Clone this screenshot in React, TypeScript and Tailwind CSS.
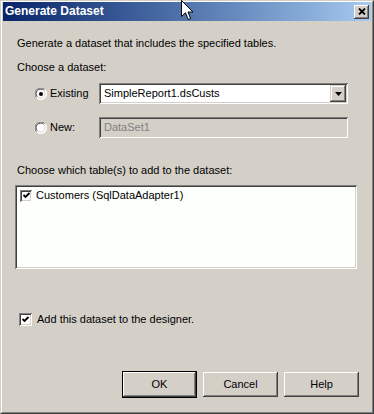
import React from 'react';

const font = { fontFamily: '"Liberation Sans", Arial, sans-serif' };

const Radio = ({ checked }: { checked?: boolean }) => (
  <svg width="12" height="12" viewBox="0 0 12 12" className="shrink-0">
    <circle cx="6" cy="6" r="5.5" fill="#fff" />
    <path d="M1.6 9.9 A5.5 5.5 0 0 1 9.9 1.6" fill="none" stroke="#808080" strokeWidth="1" />
    <path d="M2.4 8.8 A4.5 4.5 0 0 1 8.8 2.4" fill="none" stroke="#404040" strokeWidth="1" />
    <path d="M9.9 1.6 A5.5 5.5 0 0 1 1.6 9.9" fill="none" stroke="#fff" strokeWidth="1" />
    <path d="M8.8 2.4 A4.5 4.5 0 0 1 2.4 8.8" fill="none" stroke="#d4d0c8" strokeWidth="1" />
    {checked && <circle cx="6" cy="6" r="2" fill="#000" />}
  </svg>
);

const Check = ({ size = 13 }: { size?: number }) => (
  <div
    className="shrink-0 bg-white shadow-[inset_1px_1px_#808080,inset_-1px_-1px_#fff,inset_2px_2px_#404040,inset_-2px_-2px_#d4d0c8] flex items-center justify-center"
    style={{ width: size, height: size }}
  >
    <svg width="9" height="9" viewBox="0 0 9 9">
      <path d="M1.5 4 L3.5 6 L7.5 2" fill="none" stroke="#000" strokeWidth="1.8" />
    </svg>
  </div>
);

const Button = ({ label, primary }: { label: string; primary?: boolean }) =>
  primary ? (
    <div className="w-[75px] h-[27px] border border-black">
      <div className="w-full h-full flex items-center justify-center text-[11px] bg-[#d4d0c8] shadow-[inset_-1px_-1px_#404040,inset_1px_1px_#fff,inset_-2px_-2px_#808080,inset_2px_2px_#d4d0c8]">
        {label}
      </div>
    </div>
  ) : (
    <div className="w-[75px] h-[25px] flex items-center justify-center text-[11px] bg-[#d4d0c8] shadow-[inset_-1px_-1px_#404040,inset_1px_1px_#fff,inset_-2px_-2px_#808080,inset_2px_2px_#d4d0c8]">
      {label}
    </div>
  );

export default function App() {
  return (
    <div className="relative w-[374px] h-[414px] text-black text-[11px] leading-[13px]" style={font}>
      <div className="w-full h-full bg-[#d4d0c8] border border-t-[#d4d0c8] border-l-[#d4d0c8] border-r-[#404040] border-b-[#404040]">
        <div className="w-full h-full border border-t-white border-l-white border-r-[#808080] border-b-[#808080] px-px flex flex-col">
          {/* title bar */}
          <div className="h-[19px] bg-gradient-to-r from-[#0a246a] to-[#a6caf0] flex items-center justify-between pl-[2px] pr-[2px]">
            <span className="text-white font-bold text-[12px]">Generate Dataset</span>
            <div className="w-[15px] h-[14px] bg-[#d4d0c8] shadow-[inset_-1px_-1px_#404040,inset_1px_1px_#fff,inset_-2px_-2px_#808080] flex items-center justify-center">
              <svg width="8" height="7" viewBox="0 0 8 7">
                <path d="M1 0.5 L7 6.5 M7 0.5 L1 6.5" stroke="#000" strokeWidth="1.8" />
              </svg>
            </div>
          </div>

          <div className="flex flex-col px-[12px] flex-1">
            <div className="mt-[16px] pl-[2px]">Generate a dataset that includes the specified tables.</div>
            <div className="mt-[11px] pl-[2px]">Choose a dataset:</div>

            <div className="mt-[9px] flex items-center">
              <div className="ml-[20px] w-[64px] flex items-center gap-[3px]">
                <Radio checked />
                <span>Existing</span>
              </div>
              <div className="w-[249px] h-[21px] bg-white shadow-[inset_1px_1px_#808080,inset_-1px_-1px_#fff,inset_2px_2px_#404040,inset_-2px_-2px_#d4d0c8] flex items-center justify-between pl-[5px] pr-[2px]">
                <span>SimpleReport1.dsCusts</span>
                <div className="w-[16px] h-[17px] bg-[#d4d0c8] shadow-[inset_-1px_-1px_#404040,inset_1px_1px_#d4d0c8,inset_-2px_-2px_#808080,inset_2px_2px_#fff] flex items-center justify-center">
                  <svg width="7" height="4" viewBox="0 0 7 4">
                    <path d="M0 0 H7 L3.5 4 Z" fill="#000" />
                  </svg>
                </div>
              </div>
            </div>

            <div className="mt-[13px] flex items-center">
              <div className="ml-[20px] w-[64px] flex items-center gap-[3px]">
                <Radio />
                <span>New:</span>
              </div>
              <div className="w-[249px] h-[21px] bg-[#d4d0c8] shadow-[inset_1px_1px_#808080,inset_-1px_-1px_#fff,inset_2px_2px_#404040,inset_-2px_-2px_#d4d0c8] flex items-center pl-[5px] text-[#808080]">
                DataSet1
              </div>
            </div>

            <div className="mt-[26px] pl-[2px]">Choose which table(s) to add to the dataset:</div>

            <div className="mt-[8px] w-[342px] h-[84px] bg-[#fcfffb] shadow-[inset_1px_1px_#808080,inset_-1px_-1px_#fff,inset_2px_2px_#404040,inset_-2px_-2px_#d4d0c8] pt-[4px] pl-[5px]">
              <div className="flex items-center gap-[4px]">
                <Check size={12} />
                <span>Customers (SqlDataAdapter1)</span>
              </div>
            </div>

            <div className="mt-[44px] ml-[4px] flex items-center gap-[5px]">
              <Check />
              <span>Add this dataset to the designer.</span>
            </div>

            <div className="mt-[45px] flex items-center justify-end gap-[6px]">
              <Button label="OK" primary />
              <Button label="Cancel" />
              <Button label="Help" />
            </div>
          </div>
        </div>
      </div>

      {/* mouse cursor */}
      <svg className="absolute left-[181px] top-0" width="13" height="21" viewBox="0 0 13 21">
        <path d="M0.5 0.5 L0.5 16.5 L4.5 12.8 L7.2 19.5 L9.6 18.5 L7 12 L12 12 Z" fill="#fff" stroke="#000" strokeWidth="1" />
      </svg>
    </div>
  );
}
